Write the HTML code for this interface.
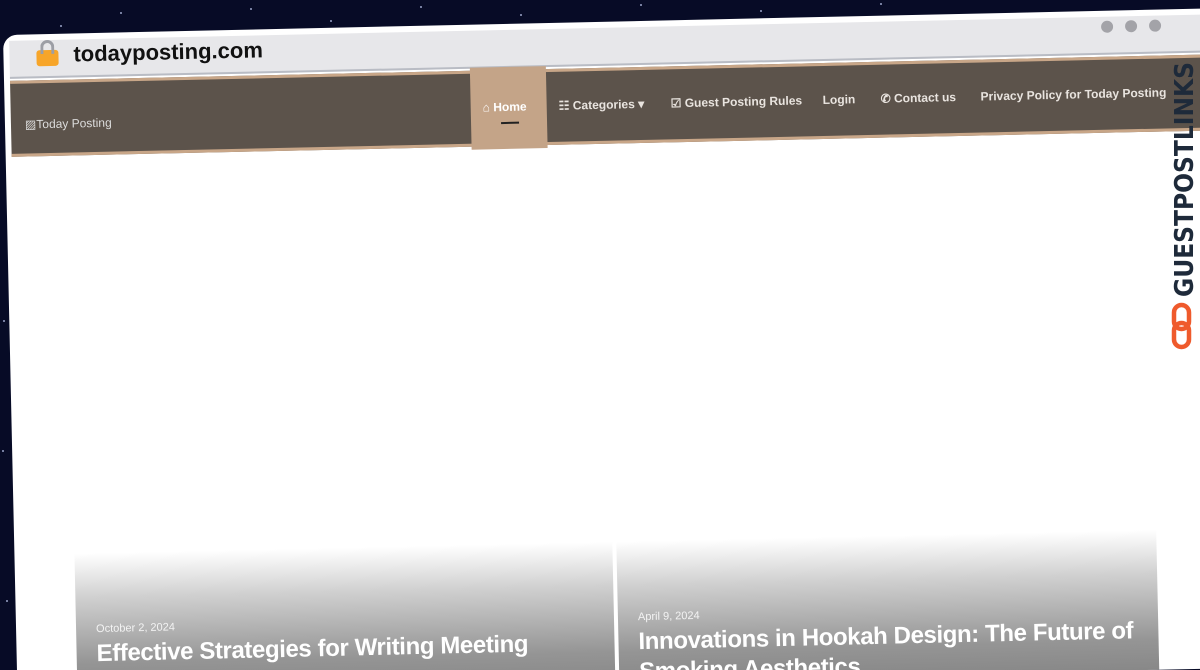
<!DOCTYPE html>
<html><head><meta charset="utf-8"><style>
*{margin:0;padding:0;box-sizing:border-box}
html,body{width:1200px;height:670px;overflow:hidden}
body{background:#070b26;font-family:"Liberation Sans",sans-serif}
.clip{position:absolute;left:0;top:0;width:1200px;height:670px;overflow:hidden;background:#070b26}
.star{position:absolute;width:2px;height:2px;background:#9aa3c8;border-radius:50%}
.frame{position:absolute;left:3px;top:35px;width:1230px;height:660px;background:#fff;border-radius:14px 14px 0 0;transform-origin:0 0;transform:rotate(-1.26deg);overflow:hidden}
.bar{position:absolute;left:6px;top:6px;right:0;height:38px;background:#e7e7ea;border-bottom:2px solid #b9bcc4}
.lock{position:absolute;left:33px;top:16px;width:22px;height:16px;background:#f7a529;border-radius:3px}
.lock:before{content:"";position:absolute;left:4px;top:-10px;width:14px;height:14px;border:3px solid #9c9ea5;border-bottom:none;border-radius:8px 8px 0 0;box-sizing:border-box}
.url{position:absolute;left:70px;top:8px;font-size:22px;font-weight:bold;color:#111}
.dot{position:absolute;top:10px;width:12px;height:12px;border-radius:50%;background:#a3a3a8}
.nav{position:absolute;left:6px;top:46px;right:0;height:76px;background:#5c534b;border-top:3px solid #c8a688;border-bottom:3px solid #c8a688}
.nav a{position:absolute;color:#e9e4df;font-size:12px;font-weight:bold;top:27px;white-space:nowrap}
.home{position:absolute;left:460px;top:-6px;width:76px;height:82px;background:#c4a488}
.home span{position:absolute;left:12px;top:33px;color:#fff;font-size:12px;font-weight:bold}
.home i{position:absolute;left:30px;top:55px;width:18px;height:2px;background:#222}
.logo{position:absolute;left:14px;top:34px;color:#ddd;font-size:12px}
.card{position:absolute;top:520px;height:200px;background:linear-gradient(#fff 0%,#d0d0d0 22%,#959595 55%,#6e6e6e 100%)}
.date{position:absolute;color:#f3f3f3;font-size:11px}
.title{position:absolute;color:#fff;font-size:24px;font-weight:bold;letter-spacing:-0.4px;line-height:30px}
.gpl{position:absolute;left:1163px;top:55px;width:37px;height:300px}
</style></head><body><div class="clip">
<div class="star" style="left:120px;top:12px"></div><div class="star" style="left:250px;top:8px"></div><div class="star" style="left:330px;top:20px"></div><div class="star" style="left:420px;top:6px"></div><div class="star" style="left:520px;top:14px"></div><div class="star" style="left:640px;top:4px"></div><div class="star" style="left:760px;top:10px"></div><div class="star" style="left:880px;top:3px"></div><div class="star" style="left:60px;top:25px"></div><div class="star" style="left:3px;top:320px"></div><div class="star" style="left:2px;top:450px"></div><div class="star" style="left:6px;top:600px"></div>
<div class="frame">
 <div class="bar"></div>
 <div class="lock"></div>
 <div class="url">todayposting.com</div>
 <div class="dot" style="left:1098px"></div><div class="dot" style="left:1122px"></div><div class="dot" style="left:1146px"></div>
 <div class="nav">
  <div class="logo">▨Today Posting</div>
  <div class="home"><span>⌂ Home</span><i></i></div>
  <a style="left:548px">☷ Categories ▾</a>
  <a style="left:660px">☑ Guest Posting Rules</a>
  <a style="left:812px">Login</a>
  <a style="left:870px">✆ Contact us</a>
  <a style="left:970px">Privacy Policy for Today Posting</a>
 </div>
 <div class="card" style="left:60px;width:538px">
  <div class="date" style="left:20px;top:70px">October 2, 2024</div>
  <div class="title" style="left:20px;top:86px">Effective Strategies for Writing Meeting</div>
 </div>
 <div class="card" style="left:602px;width:540px">
  <div class="date" style="left:20px;top:70px">April 9, 2024</div>
  <div class="title" style="left:20px;top:86px">Innovations in Hookah Design: The Future of<br>Smoking Aesthetics</div>
 </div>
</div>
<svg class="gpl" viewBox="0 0 37 300">
 <text transform="translate(30,242) rotate(-90)" font-family="DejaVu Sans" font-weight="bold" font-size="26" fill="#1e2a3a" textLength="235" lengthAdjust="spacingAndGlyphs">GUESTPOSTLINKS</text>
 <g fill="none" stroke="#ef5a2c" stroke-width="4.5">
  <rect x="11" y="250" width="15" height="24" rx="7.5"/>
  <rect x="11" y="268" width="15" height="24" rx="7.5"/>
 </g>
</svg>
</div></body></html>
